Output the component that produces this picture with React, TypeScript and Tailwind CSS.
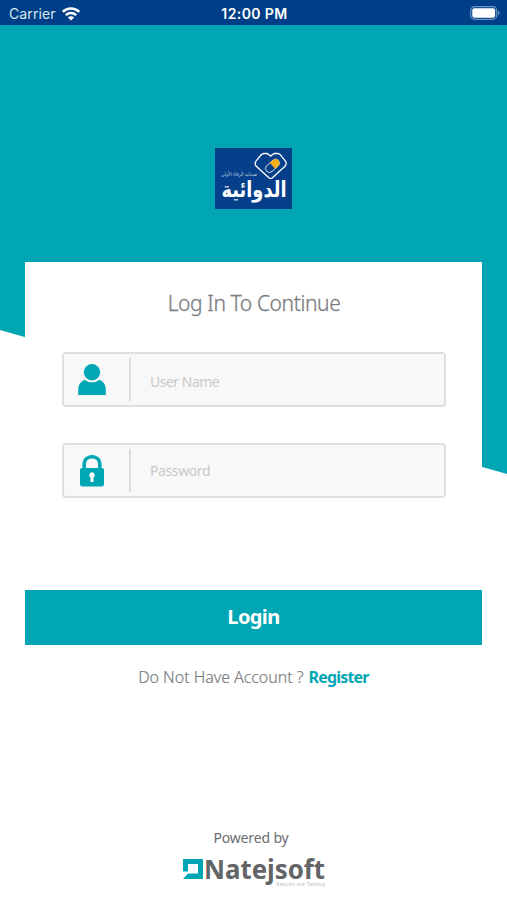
import React from "react";

type FieldProps = {
  placeholder: string;
  type: string;
  icon: React.ReactNode;
};

function StatusBar() {
  return (
    <header className="grid grid-cols-3 items-center h-[25px] pl-[9px] pr-[7px] bg-[#003f87] text-white font-['Inter',sans-serif]">
      <div className="flex items-center gap-[6px] pt-[2px]">
        <span className="text-[14px] leading-none tracking-[0.1px] text-[#dbe8f5]">Carrier</span>
        <svg className="w-[18px] h-[14px]" viewBox="0 0 18 14" fill="none">
          <path d="M.8 4.800C5.400.4 12.600.4 17.200 4.800" stroke="#fff" strokeWidth="2.500" />
          <path d="M3.800 8.100c3-2.800 7.400-2.800 10.400 0" stroke="#fff" strokeWidth="2.400" />
          <path d="M9 13.500 5.900 10.500c1.800-1.600 4.400-1.600 6.200 0Z" fill="#fff" />
        </svg>
      </div>
      <span className="pt-[2px] text-center text-[14px] leading-none font-semibold tracking-[0.4px] whitespace-nowrap">
        12:00 PM
      </span>
      <svg className="justify-self-end w-[30px] h-[14px]" viewBox="0 0 30 14">
        <rect x="0.700" y="0.700" width="26" height="12.600" rx="3.800" fill="none" stroke="#6d93c0" strokeWidth="1.200" />
        <rect x="2.300" y="2.300" width="22.800" height="9.400" rx="2" fill="#fff" />
        <path d="M28 4.800c2 .6 2 3.800 0 4.400Z" fill="#6d93c0" />
      </svg>
    </header>
  );
}

function BrandLogo() {
  return (
    <svg className="w-[77px] h-[61px] overflow-visible" viewBox="0 0 77 61">
      <rect width="77" height="61" fill="#07408a" />
      <path
        d="M54.200 30 41.300 18.200q-2.200-2.400-.3-5l5.200-6.400q1.200-1.300 3-1.300h2.300q1.200 0 2.200 1l2 1.600 2-1.600q1-1 2.200-1h2.500q1.800 0 3 1.300l5 6.400q1.800 2.600-.4 5L57.200 30q-1.500 1-3 0Z"
        fill="none"
        stroke="#fff"
        strokeWidth="1.300"
      />
      <g transform="rotate(-42 57.500 17.800)">
        <rect x="49.500" y="13.900" width="16" height="7.800" rx="3.900" fill="none" stroke="#dce5f0" strokeWidth="0.900" />
        <path d="M57.500 13.900h4.100a3.900 3.900 0 0 1 0 7.800h-4.100Z" fill="#f9ae1c" />
      </g>
      <text x="42" y="28" textAnchor="end" direction="ltr" textLength="36" lengthAdjust="spacingAndGlyphs" fontSize="5.500" fill="#b9cbe0" fontFamily="DejaVu Sans, sans-serif">
        صيدلية الرفاء الأولى
      </text>
      <text x="39" y="49" textAnchor="middle" textLength="65" lengthAdjust="spacingAndGlyphs" fontSize="22" fontWeight="700" fill="#fff" fontFamily="DejaVu Sans, sans-serif">
        الدوائية
      </text>
    </svg>
  );
}

function UserIcon() {
  return (
    <svg className="w-[28px] h-[32px]" viewBox="0 0 28 32" fill="#00a6b4">
      <circle cx="14" cy="8.200" r="8.200" />
      <path d="M6.500 15.800c4.500 3.400 10.500 3.400 15 0 4.200 2 6.300 5.500 6.300 9.700V31H.2v-5.500c0-4.200 2.100-7.700 6.300-9.700Z" />
    </svg>
  );
}

function LockIcon() {
  return (
    <svg className="w-[24px] h-[32px]" viewBox="0 0 24 32">
      <path d="M4.200 15V9.500c0-10.300 15.600-10.300 15.600 0V15" fill="none" stroke="#00a6b4" strokeWidth="3.600" />
      <rect y="13" width="24" height="18.500" rx="2" fill="#00a6b4" />
      <path d="M12 17.300a2.900 2.900 0 0 1 1.500 5.300v4.500h-3v-4.500a2.900 2.900 0 0 1 1.500-5.300Z" fill="#fff" />
    </svg>
  );
}

function Field({ placeholder, type, icon }: FieldProps) {
  return (
    <label className="flex items-center h-[55px] rounded-[4px] border-2 border-[#dfdfdf] bg-[#f8f8f8]">
      <span className="flex justify-center w-[56px]">{icon}</span>
      <span className="w-[2px] h-[43px] ml-[9px] bg-[#dcdcdc]" />
      <input
        className={
          type === "password"
            ? "flex-1 min-w-0 ml-[19px] pb-[1px] bg-transparent outline-none text-[14px] tracking-[-0.4px] placeholder:text-[#c9c9c9]"
            : "flex-1 min-w-0 ml-[19px] pt-[3px] bg-transparent outline-none text-[14px] tracking-[-0.5px] placeholder:text-[#c9c9c9]"
        }
        type={type}
        placeholder={placeholder}
      />
    </label>
  );
}

function NatejsoftLogo() {
  return (
    <svg className="w-[144px] h-[34px] overflow-visible" viewBox="0 0 144 34">
      <path d="M1 4h20v20H1l5-5.500h10V9H6v7.500H1Z" fill="#00a6b4" />
      <text x="22" y="24" textLength="121" lengthAdjust="spacingAndGlyphs" fontSize="27" fontWeight="700" fill="#636466" fontFamily="Noto Sans, sans-serif">
        Natejsoft
      </text>
      <text x="94" y="31" textLength="49" lengthAdjust="spacingAndGlyphs" fontSize="6" fill="#c4c4c4" fontFamily="Noto Sans, sans-serif">
        Results are Talking
      </text>
    </svg>
  );
}

export default function App() {
  return (
    <div className="flex flex-col w-[507px] h-[900px] overflow-hidden bg-white font-['Noto_Sans',sans-serif]">
      <StatusBar />
      <main className="relative flex flex-col flex-1 px-[25px]">
        <div className="absolute inset-x-0 top-0 h-[449px] bg-[#00a6b4] [clip-path:polygon(0_0,100%_0,100%_100%,0_305px)]" />
        <div className="relative flex justify-center pt-[123px] pb-[53px]">
          <BrandLogo />
        </div>
        <form className="relative flex flex-col">
          <div className="flex flex-col h-[328px] w-[457px] pl-[37px] pr-[36px] bg-white">
            <h1 className="h-[90px] pt-[26px] text-center text-[21px] leading-[30px] font-light tracking-[-0.400px] [-webkit-text-stroke:0.3px_#7b7d80] text-[#7b7d80]">
              Log In To Continue
            </h1>
            <div className="flex flex-col gap-[36px]">
              <Field placeholder="User Name" type="text" icon={<UserIcon />} />
              <Field placeholder="Password" type="password" icon={<LockIcon />} />
            </div>
          </div>
          <button
            className="h-[55px] pb-[2px] bg-[#00a6b4] text-white text-[20px] font-bold tracking-[-0.600px]"
            type="button"
          >
            Login
          </button>
        </form>
        <p className="relative flex justify-center gap-[5px] pt-[20px] text-[16px] leading-[24px] text-[#7b7d80]">
          <span className="font-light tracking-[-0.050px] [-webkit-text-stroke:0.2px_#7b7d80]">Do Not Have Account ?</span>
          <a className="font-bold tracking-[-0.800px] text-[#00a6b4]">Register</a>
        </p>
        <footer className="relative flex flex-col items-center mt-auto pb-[11px]">
          <span className="text-[14px] leading-[20px] -ml-[5px] tracking-[-0.150px] text-[#6b6d70]">Powered by</span>
          <div className="pt-[7px]">
            <NatejsoftLogo />
          </div>
        </footer>
      </main>
    </div>
  );
}
